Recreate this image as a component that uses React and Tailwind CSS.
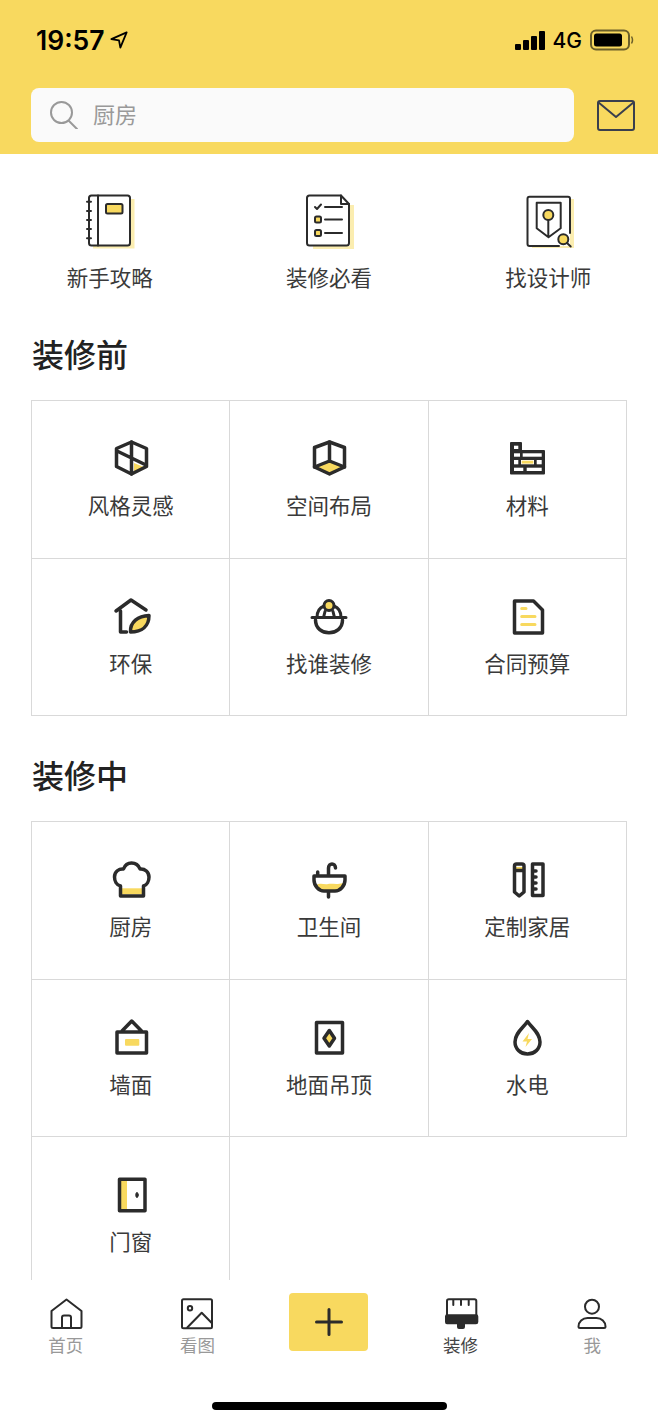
import React from 'react';

const Y = '#F8D95F';
const D = '#2b2b2b';

// 40x40 line icons used in the category grids
const Icon = ({ children }) => (
  <svg width="40" height="40" viewBox="0 0 40 40" fill="none" stroke={D} strokeWidth="3.5" strokeLinejoin="round" strokeLinecap="round">
    {children}
  </svg>
);

const StyleIcon = () => (
  <Icon>
    <path d="M23 25 L34 29.5 L23 34Z" fill={Y} stroke="none" />
    <path d="M20.5 4 L35.5 10.5 V28.5 L20.5 36 L5.5 28.5 V10.5Z" />
    <path d="M20.5 4 L20.5 36 M6 13 L35 27" />
  </Icon>
);
const SpaceIcon = () => (
  <Icon>
    <path d="M20.5 23 L35 28.5 L20.5 35 L6 28.5Z" fill={Y} stroke="none" />
    <path d="M20.5 4 L35.5 9.5 V29 L20.5 36 L5.5 29 V9.5Z" />
    <path d="M20.5 4 V23 M5.5 29 L20.5 23 L35.5 29" />
  </Icon>
);
const BrickIcon = () => (
  <svg width="40" height="40" viewBox="0 0 40 40">
    <path d="M4 4 H14 Q15 4 15 5 V12 H37 Q38 12 38 13 V35.5 Q38 36.5 37 36.5 H4 Q3 36.5 3 35.5 V5 Q3 4 4 4Z" fill={D} />
    <g fill="#fff">
      <rect x="7" y="7.7" width="4.3" height="3.3" />
      <rect x="7" y="15.3" width="6" height="3.4" />
      <rect x="15.7" y="15.3" width="19" height="3.4" />
      <rect x="7" y="22" width="4.3" height="4.3" />
      <rect x="14" y="22" width="13" height="4.3" />
      <rect x="29.7" y="22" width="5" height="4.3" />
      <rect x="7" y="29.7" width="9.3" height="3.3" />
      <rect x="19.7" y="29.7" width="15" height="3.3" />
    </g>
    <rect x="14.7" y="22.7" width="11.6" height="2.9" fill={Y} />
  </svg>
);
const EcoIcon = () => (
  <Icon>
    <path d="M5 15 L20 4 L35 14 M9.5 15 V36 H15.5" />
    <path d="M19.5 36 C19 26 27 20 38 19.5 C38 30 31 36 19.5 36Z" fill={Y} />
  </Icon>
);
const HelmetIcon = () => (
  <Icon>
    <path d="M8 21.5 C8 15 11 11.5 15 10 M32 21.5 C32 15 29 11.5 25 10 M3 21.5 H37 M14.5 21.5 L16 15.5 M25.5 21.5 L24 15.5" strokeWidth="3" />
    <path d="M6.5 24 C6.5 41 33.5 41 33.5 24" />
    <circle cx="20" cy="9.5" r="5" fill={Y} strokeWidth="3" />
  </Icon>
);
const ContractIcon = () => (
  <Icon>
    <path d="M7.5 5 H26.5 L35.5 14 V37 H7.5Z" />
    <path d="M14.7 12.5 H19 M14.7 20.5 H28 M14.7 28.5 H28" stroke={Y} strokeWidth="3" />
  </Icon>
);
const HatIcon = () => (
  <Icon>
    <rect x="9.5" y="29.3" width="23" height="6" fill={Y} stroke="none" />
    <path d="M9.5 27 C5.5 26 3.5 22 3.5 18 C3.5 12.5 8 9.5 12.5 10 C14 6 17 4 20.5 4 C24 4 27.5 6 29 10 C34 9.5 38 13 38 18 C38 22 36 26 32.5 27 V37 H9.5Z" />
  </Icon>
);
const SinkIcon = () => (
  <Icon>
    <path d="M7 26 C12 23 15 26 19 25 C23 24 27 26 34 24 C34 28 30 31 26 31 H15 C11 31 8 29 7 26Z" fill={Y} stroke="none" />
    <path d="M5 17 H36 V21 C36 27 31 32 26 32 H15 C10 32 5 27 5 21Z M19.5 16.5 V9 C19.5 3.5 26.5 3.5 26.5 9 M19.5 32 V38 M8.7 13 V16" />
  </Icon>
);
const RulerIcon = () => (
  <Icon>
    <path d="M8 8 H16 V10 H8Z" fill={Y} stroke="none" />
    <path d="M7.5 33 V7 Q7.5 5 9.5 5 H15 Q17 5 17 7 V33 L12.2 37Z M7.5 11.5 H17" />
    <path d="M25.5 5 H36 V36.5 H25.5Z M25.5 12 H29 M25.5 18 H29 M25.5 24 H29 M25.5 30 H29" />
  </Icon>
);
const WallIcon = () => (
  <Icon>
    <path d="M6 15 H35.5 V36 H6Z M11 14 L20.7 4 L30.5 14" />
    <rect x="14" y="22" width="14.3" height="6.7" rx="1" fill={Y} stroke="none" />
  </Icon>
);
const FloorIcon = () => (
  <Icon>
    <path d="M7.5 5.5 H33.5 V36 H7.5Z" />
    <path d="M20.3 13.5 L25.5 21.3 L20.3 29 L15 21.3Z" fill={Y} />
  </Icon>
);
const WaterIcon = () => (
  <Icon>
    <path d="M20.5 4.5 C16 11 8 16 8 25 C8 32 13.5 37 20.5 37 C27.5 37 33 32 33 25 C33 16 25 11 20.5 4.5Z" />
    <path d="M22 16 L15.5 24.5 H20 L18.5 30 L25 22 H20.5Z" fill={Y} stroke="none" />
  </Icon>
);
const DoorIcon = () => (
  <Icon>
    <rect x="10" y="6" width="6" height="30" fill={Y} stroke="none" />
    <path d="M8.5 5.3 H34 V36.7 H8.5Z" />
    <ellipse cx="26" cy="21" rx="1.2" ry="2.6" fill={D} stroke={D} strokeWidth="1" />
  </Icon>
);

// 60x60 illustrations of the shortcut row
const BookIcon = () => (
  <svg width="60" height="60" viewBox="0 0 60 60" fill="none" stroke={D} strokeWidth="2" strokeLinecap="round" strokeLinejoin="round">
    <path d="M50 9 H54.5 V58.5 H13 V55 H50Z" fill="#FBEDB0" stroke="none" />
    <rect x="9" y="5.5" width="41" height="50" rx="2.5" fill="#fff" />
    <path d="M18 5.5 V55.5 M7 11.7 H11 M7 21 H11 M7 30 H11 M7 39 H11 M7 48.3 H11" />
    <rect x="26" y="14" width="16.5" height="9.5" rx="1.5" fill={Y} />
  </svg>
);
const ListIcon = () => (
  <svg width="60" height="60" viewBox="0 0 60 60" fill="none" stroke={D} strokeWidth="2" strokeLinecap="round" strokeLinejoin="round">
    <path d="M51 15 H55 V59 H14 V56 H51Z" fill="#FBEDB0" stroke="none" />
    <path d="M10.5 5.5 H42 L50 14 V53 Q50 55.5 47.5 55.5 H10.5 Q8 55.5 8 53 V8 Q8 5.5 10.5 5.5Z" fill="#fff" />
    <path d="M42 5.5 V14 H50 M16 17 L18 19 L22 14.5 M26 17 H43 M26 29.5 H43 M26 43 H43" />
    <rect x="16" y="26.5" width="6" height="6" rx="1.5" fill={Y} />
    <rect x="16" y="40" width="6" height="6" rx="1.5" fill={Y} />
  </svg>
);
const DesignerIcon = () => (
  <svg width="60" height="60" viewBox="0 0 60 60" fill="none" stroke={D} strokeWidth="2" strokeLinecap="round" strokeLinejoin="round">
    <path d="M52 9 H56 V58 H14 V56 H52Z" fill="#FBEDB0" stroke="none" />
    <path d="M41 56 H11.5 Q9.5 56 9.5 54 V8.7 Q9.5 6.7 11.5 6.7 H50 Q52 6.7 52 8.7 V43" fill="#fff" />
    <path d="M18.7 12.7 H42.7 V38.3 L30.5 47.3 L18.7 38.3Z M30.3 30 V47" />
    <circle cx="30.3" cy="25" r="5" fill={Y} />
    <circle cx="45.3" cy="49.3" r="5" fill={Y} />
    <path d="M49 53 L52.7 56.5" />
  </svg>
);

// Bottom tab icons, 36x36
const TabIcon = ({ children }) => (
  <svg width="36" height="36" viewBox="0 0 36 36" fill="none" stroke={D} strokeWidth="2" strokeLinecap="round" strokeLinejoin="round">
    {children}
  </svg>
);
const HomeIcon = () => (
  <TabIcon>
    <path d="M3.5 15 L18.5 3.5 L33.5 15 V30.5 Q33.5 32 32 32 H5 Q3.5 32 3.5 30.5Z M14 32 V21.5 Q14 19.5 16 19.5 H21 Q23 19.5 23 21.5 V32" />
  </TabIcon>
);
const ImageIcon = () => (
  <TabIcon>
    <rect x="3" y="3.2" width="30" height="29" rx="1.5" />
    <circle cx="11" cy="12.3" r="2.2" />
    <path d="M8.3 31.5 L22.7 16.7 L33 27.3" />
  </TabIcon>
);
const BrushIcon = () => (
  <svg width="36" height="36" viewBox="0 0 36 36" fill="none">
    <path d="M4 19 V5 Q4 3.2 5.8 3.2 H31.5 Q33.3 3.2 33.3 5 V19 M10.3 3.5 V9 M18 3.5 V9 M25.7 3.5 V9" stroke={D} strokeWidth="2" strokeLinecap="round" />
    <path d="M4 18.3 H33 Q35.3 18.3 35.3 20.6 V26 Q35.3 28.3 33 28.3 H22 V31 Q22 33 20 33 H16 Q14 33 14 31 V28.3 H4 Q2 28.3 2 26 V20.6 Q2 18.3 4 18.3Z" fill={D} />
  </svg>
);
const UserIcon = () => (
  <TabIcon>
    <circle cx="18" cy="10.7" r="7" />
    <path d="M13.5 22 H22.5 C27.5 22 31.5 26 31.5 30.5 Q31.5 32 30 32 H6 Q4.5 32 4.5 30.5 C4.5 26 8.5 22 13.5 22Z" />
  </TabIcon>
);

const shortcuts = [
  { label: '新手攻略', icon: BookIcon },
  { label: '装修必看', icon: ListIcon },
  { label: '找设计师', icon: DesignerIcon },
];

const before = [
  { label: '风格灵感', icon: StyleIcon },
  { label: '空间布局', icon: SpaceIcon },
  { label: '材料', icon: BrickIcon },
  { label: '环保', icon: EcoIcon },
  { label: '找谁装修', icon: HelmetIcon },
  { label: '合同预算', icon: ContractIcon },
];

const during = [
  { label: '厨房', icon: HatIcon },
  { label: '卫生间', icon: SinkIcon },
  { label: '定制家居', icon: RulerIcon },
  { label: '墙面', icon: WallIcon },
  { label: '地面吊顶', icon: FloorIcon },
  { label: '水电', icon: WaterIcon },
  { label: '门窗', icon: DoorIcon },
];

const Section = ({ title, items, className }) => (
  <section className={className}>
    <h2 className="h-[40px] pl-[32px] text-[32px] leading-[40px] font-medium text-[#222]">{title}</h2>
    <div className="mx-[31px] mt-[27px] grid grid-cols-3 border-t border-l border-[#d9d9d9]">
      {items.map((item) => (
        <div key={item.label} className="flex h-[157.5px] flex-col items-center border-r border-b border-[#d9d9d9] pt-[37px]">
          <item.icon />
          <span className="mt-[12px] text-[21.5px] leading-[30px] text-[#3a3a3a]">{item.label}</span>
        </div>
      ))}
    </div>
  </section>
);

const tabs = [
  { label: '首页', icon: HomeIcon },
  { label: '看图', icon: ImageIcon },
  { plus: true },
  { label: '装修', icon: BrushIcon, active: true },
  { label: '我', icon: UserIcon },
];

export default function App() {
  return (
    <div className="flex h-[1425px] w-[658px] flex-col overflow-hidden bg-white font-['Noto_Sans_CJK_SC','Noto_Sans',sans-serif]">
      <header className="h-[154px] shrink-0 bg-[#F8D95F]">
        <div className="flex h-[80px] items-center justify-between pr-[24px] pl-[36px]">
          <div className="flex items-center gap-[5px]">
            <span className="font-['Inter',sans-serif] text-[26.5px] leading-none font-semibold text-black">19:57</span>
            <svg width="18" height="18" viewBox="0 0 20 20" fill="none" stroke="#000" strokeWidth="2" strokeLinejoin="round">
              <path d="M18.5 1.5 L1.5 9 L10 10.5 L11.5 18.5Z" />
            </svg>
          </div>
          <div className="flex items-center gap-[8px]">
            <div className="flex items-end gap-[2px]">
              <span className="h-[6px] w-[6px] rounded-[1px] bg-black" />
              <span className="h-[10px] w-[6px] rounded-[1px] bg-black" />
              <span className="h-[14px] w-[6px] rounded-[1px] bg-black" />
              <span className="h-[19px] w-[6px] rounded-[1px] bg-black" />
            </div>
            <span className="font-['Inter',sans-serif] text-[21px] leading-none font-medium text-black">4G</span>
            <svg width="44" height="22" viewBox="0 0 44 22" fill="none">
              <rect x="1" y="1.5" width="38" height="19" rx="5" stroke="#6b5f2a" strokeWidth="2" />
              <rect x="4" y="4.5" width="28" height="13" rx="2.5" fill="#000" />
              <path d="M41.5 7.5 Q43.5 11 41.5 14.5" stroke="#6b5f2a" strokeWidth="1.5" />
            </svg>
          </div>
        </div>
        <div className="mt-[8px] flex items-center pl-[31px]">
          <div className="flex h-[54px] w-[543px] items-center rounded-lg bg-[#fafafa] pl-[19px]">
            <svg width="28" height="28" viewBox="0 0 28 28" fill="none" stroke="#999" strokeWidth="2" strokeLinecap="round">
              <circle cx="11.5" cy="11.5" r="10.5" />
              <path d="M19 20 L27 28" />
            </svg>
            <span className="ml-[15px] pb-[4px] text-[22px] leading-[30px] text-[#999]">厨房</span>
          </div>
          <svg className="ml-[23px]" width="38" height="31" viewBox="0 0 38 31" fill="none" stroke="#3a3f4d" strokeWidth="2" strokeLinejoin="round">
            <rect x="1" y="1" width="36" height="29" rx="2" />
            <path d="M1 2 L19 17 L37 2" />
          </svg>
        </div>
      </header>

      <main className="min-h-0 flex-1 overflow-hidden">
        <div className="grid grid-cols-3 pt-[36px]">
          {shortcuts.map((item) => (
            <div key={item.label} className="flex flex-col items-center">
              <item.icon />
              <span className="mt-[12px] text-[21.5px] leading-[30px] text-[#3a3a3a]">{item.label}</span>
            </div>
          ))}
        </div>
        <Section className="mt-[41px]" title="装修前" items={before} />
        <Section className="mt-[38px]" title="装修中" items={during} />
      </main>

      <nav className="h-[145px] shrink-0 bg-white">
        <div className="grid h-[122px] grid-cols-5">
          {tabs.map((tab, i) =>
            tab.plus ? (
              <div key={i} className="flex justify-center pt-[13px]">
                <div className="flex h-[58px] w-[79px] items-center justify-center rounded-[4px] bg-[#F8D95F]">
                  <svg width="28" height="28" viewBox="0 0 28 28" stroke={D} strokeWidth="3" strokeLinecap="round">
                    <path d="M14 1.5 V26.5 M1.5 14 H26.5" />
                  </svg>
                </div>
              </div>
            ) : (
              <div key={i} className="flex flex-col items-center pt-[16px]">
                <tab.icon />
                <span className={`mt-[1px] text-[17.5px] leading-[24px] ${tab.active ? 'text-[#444]' : 'text-[#999]'}`}>{tab.label}</span>
              </div>
            )
          )}
        </div>
        <div className="mx-auto h-[8px] w-[235px] rounded-full bg-black" />
      </nav>
    </div>
  );
}
